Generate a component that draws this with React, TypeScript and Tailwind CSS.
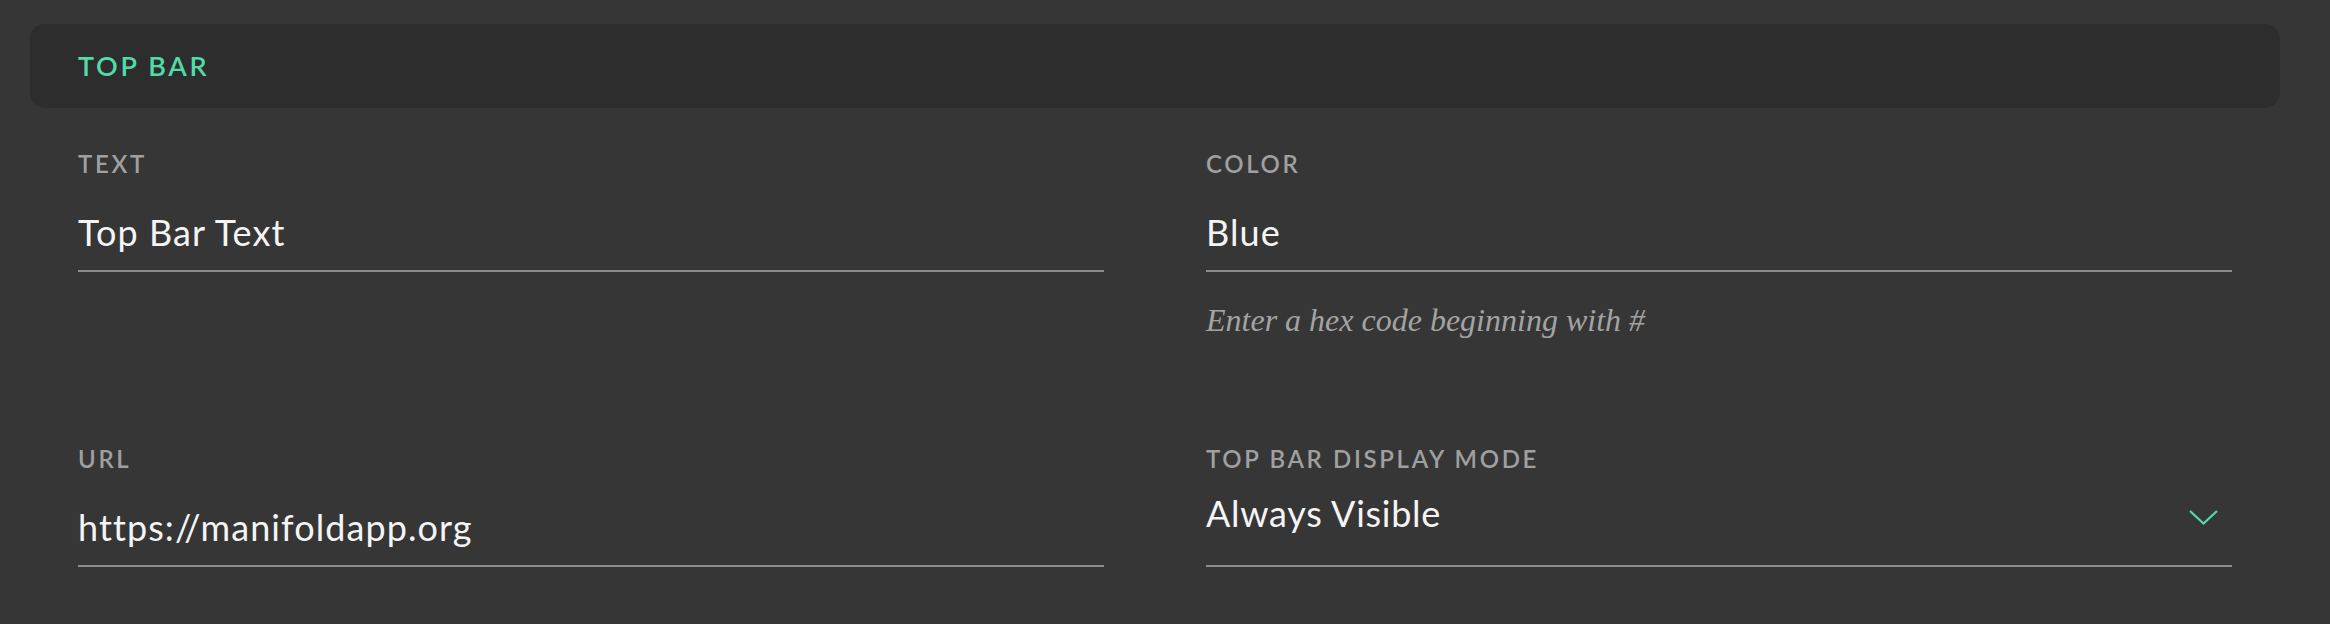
import React from 'react'

const sans = "font-['Lato','Noto_Sans',sans-serif]"

interface FieldProps {
  label: string
  value: string
  help?: string
}

const Label = ({ children }: { children: React.ReactNode }) => (
  <div className={`${sans} text-[24px] leading-[24px] tracking-[0.11em] font-semibold uppercase text-[#a0a0a0]`}>
    {children}
  </div>
)

const TextField: React.FC<FieldProps> = ({ label, value, help }) => (
  <div>
    <Label>{label}</Label>
    <div className={`${sans} border-b-2 border-[#8c8c8c] pt-[36px] pb-[18px] text-[36px] leading-[40px] tracking-[0.03em] text-[#f4f4f4]`}>
      {value}
    </div>
    {help && (
      <p className="mt-[30px] font-['Liberation_Serif',serif] italic text-[32px] leading-[36px] text-[#a3a3a3]">
        {help}
      </p>
    )}
  </div>
)

const SelectField: React.FC<FieldProps> = ({ label, value }) => (
  <div>
    <Label>{label}</Label>
    <div className="flex items-center justify-between border-b-2 border-[#8c8c8c] pt-[22px] pb-[32px] pr-[14px]">
      <span className={`${sans} text-[36px] leading-[40px] tracking-[0.02em] text-[#f4f4f4]`}>{value}</span>
      <svg width="29" height="15" viewBox="0 0 29 15" fill="none" className="mt-[8px]">
        <polyline points="1,1 14.5,13.5 28,1" stroke="#52dba8" strokeWidth="2.2" />
      </svg>
    </div>
  </div>
)

export default function App() {
  return (
    <div className="min-h-screen w-full bg-[#363636] pt-[24px] pl-[30px] pr-[50px]">
      <div className="flex h-[84px] items-center rounded-[15px] bg-[#2d2d2d] pl-[48px]">
        <h2 className={`${sans} text-[27px] font-semibold tracking-[0.1em] text-[#52dba8]`}>TOP BAR</h2>
      </div>

      <div className="grid grid-cols-2 gap-x-[102px] gap-y-[109px] px-[48px] pt-[44px]">
        <TextField label="Text" value="Top Bar Text" />
        <TextField label="Color" value="Blue" help="Enter a hex code beginning with #" />
        <TextField label="URL" value="https://manifoldapp.org" />
        <SelectField label="Top Bar Display Mode" value="Always Visible" />
      </div>
    </div>
  )
}
